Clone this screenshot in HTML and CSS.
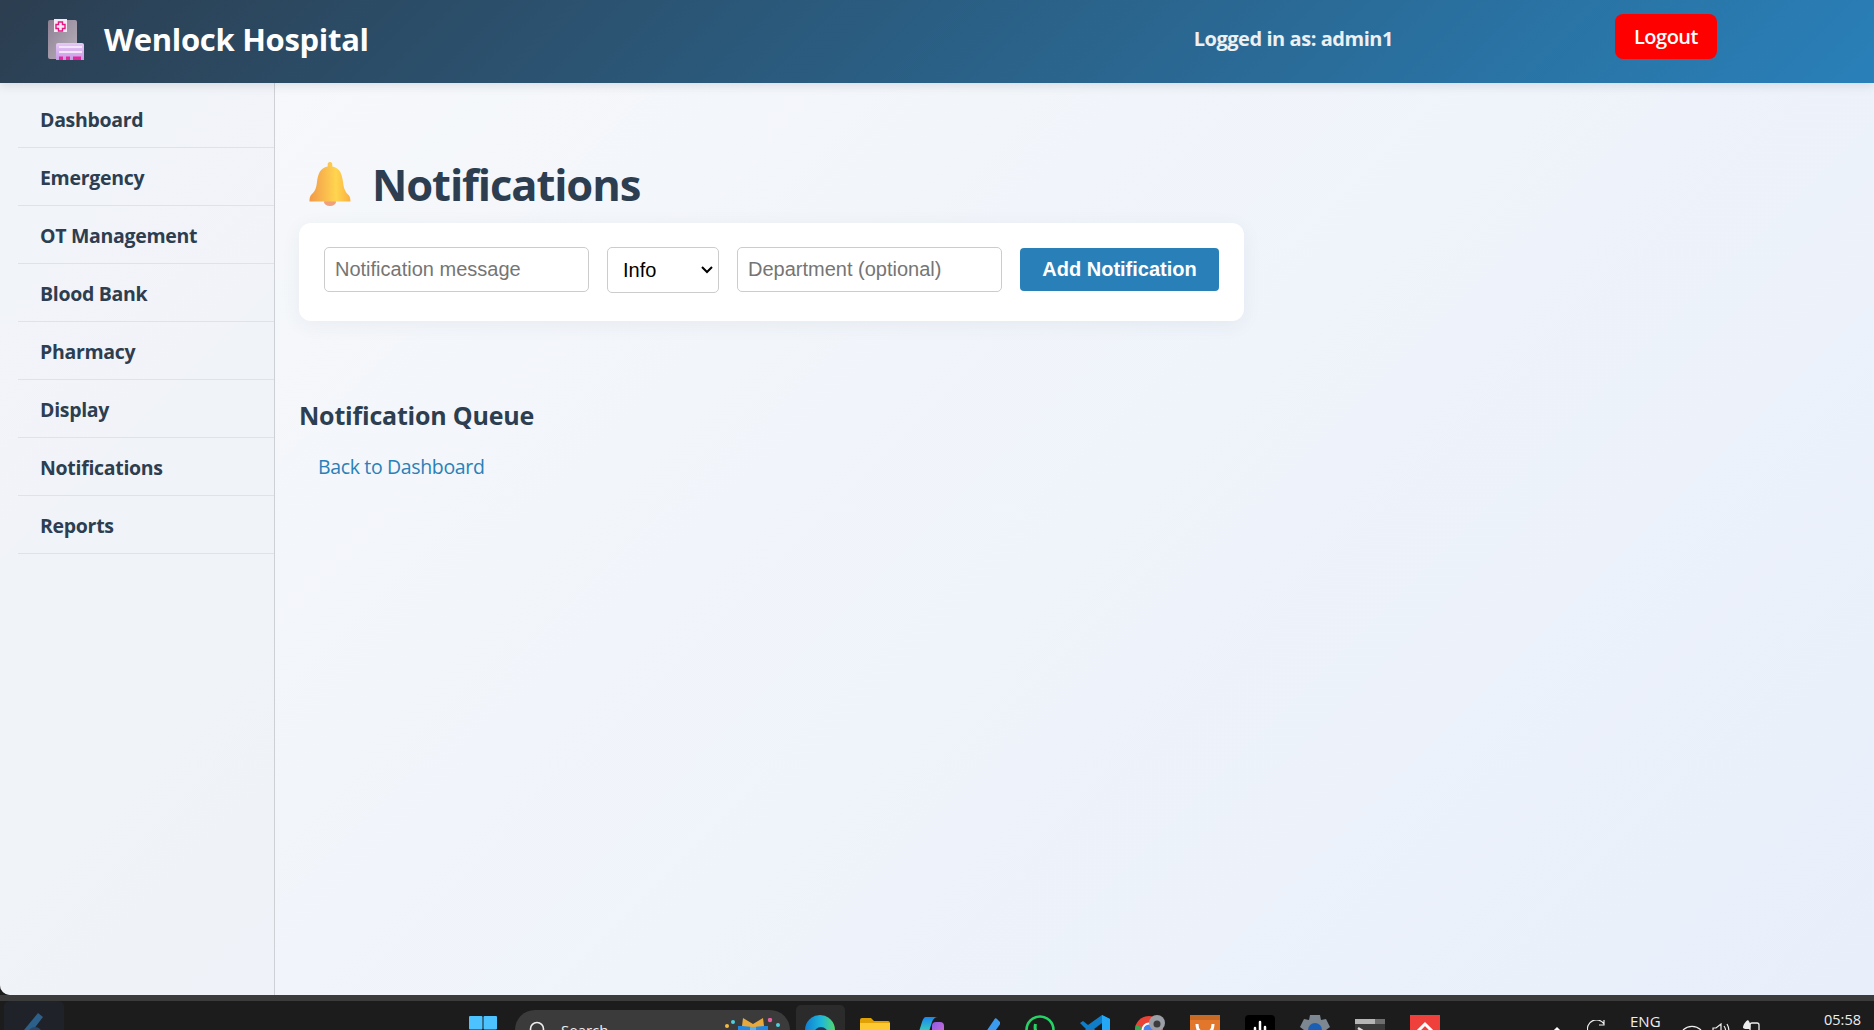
FILE: index.html
```html
<!DOCTYPE html>
<html lang="en">
<head>
<meta charset="utf-8">
<title>Notifications - Wenlock Hospital</title>
<link rel="stylesheet" href="styles.css">
</head>
<body>
<div class="window">
  <header class="topbar">
    <svg class="logo" viewBox="0 0 36 41" width="36" height="41">
      <defs>
        <linearGradient id="bld" x1="0" y1="0" x2="1" y2="1"><stop offset="0" stop-color="#8d8093"/><stop offset="1" stop-color="#b9b3bd"/></linearGradient>
        <linearGradient id="frt" x1="0" y1="0" x2="0" y2="1"><stop offset="0" stop-color="#e6c8f5"/><stop offset="1" stop-color="#c79ae6"/></linearGradient>
      </defs>
      <path d="M2 1h25a2 2 0 0 1 2 2v37H2a2 2 0 0 1-2-2V3a2 2 0 0 1 2-2z" fill="url(#bld)"/>
      <rect x="6" y="0" width="13" height="13" fill="#f5e9f5"/>
      <path d="M10.5 3h4v2.500H17v4h-2.500V12h-4V9.500H8v-4h2.500z" fill="none" stroke="#e5177f" stroke-width="1.400"/>
      <path d="M10 24h24a2 2 0 0 1 2 2v15H8V26a2 2 0 0 1 2-2z" fill="url(#frt)"/>
      <rect x="11" y="27" width="23" height="2" fill="#f3e6fa"/>
      <rect x="11" y="32" width="23" height="2" fill="#f3e6fa"/>
      <rect x="11" y="37.500" width="4" height="3.500" fill="#e5279f"/>
      <rect x="18" y="37.500" width="4" height="3.500" fill="#e5279f"/>
      <rect x="25" y="37.500" width="8" height="3.500" fill="#e5279f"/>
    </svg>
    <div class="brand">Wenlock Hospital</div>
    <div class="user">Logged in as: admin1</div>
    <button class="logout">Logout</button>
  </header>
  <div class="body">
    <nav class="sidebar">
      <a class="nav-item">Dashboard</a>
      <a class="nav-item">Emergency</a>
      <a class="nav-item">OT Management</a>
      <a class="nav-item">Blood Bank</a>
      <a class="nav-item">Pharmacy</a>
      <a class="nav-item">Display</a>
      <a class="nav-item">Notifications</a>
      <a class="nav-item">Reports</a>
    </nav>
    <main class="content">
      <h1 class="page-title">
        <svg class="bell" viewBox="0 0 42 44" width="42" height="44">
          <defs>
            <linearGradient id="bg" x1="0" y1="0" x2="1" y2="0"><stop offset="0" stop-color="#f2994a"/><stop offset=".65" stop-color="#ffd54f"/><stop offset="1" stop-color="#fbb040"/></linearGradient>
          </defs>
          <ellipse cx="21" cy="40" rx="6" ry="4" fill="#f0a07a"/>
          <path d="M21 0c1.500 0 2.300 1 2.300 2.300v2.200C31 6 33 12 34 20c.6 5 1.500 9 5 12.500 1.500 1.400 2.500 3 2.500 7H.5c0-4.500 1-6 2.500-7.500C6.500 29 7.400 25 8 20 9 12 11 6 18.700 4.500V2.300C18.700 1 19.500 0 21 0z" fill="url(#bg)"/>
        </svg>
        <span>Notifications</span>
      </h1>
      <form class="card">
        <input class="field" type="text" placeholder="Notification message">
        <select class="level"><option>Info</option></select>
        <input class="field" type="text" placeholder="Department (optional)">
        <button class="add" type="button">Add Notification</button>
      </form>
      <h2 class="queue">Notification Queue</h2>
      <a class="back">Back to Dashboard</a>
    </main>
  </div>
</div>
<div class="strip"></div>
<footer class="taskbar">
  <div class="appbox">
    <svg viewBox="0 0 26 30" width="26" height="30"><path d="M2 18 16 1l5 4-10 13z" fill="#2c5f8a"/><circle cx="13" cy="22" r="7" fill="#27496b"/></svg>
  </div>
  <svg class="start" viewBox="0 0 28 28" width="28" height="28"><rect x="0" y="0" width="13.500" height="13.500" rx="1" fill="#4cc2ff"/><rect x="14.500" y="0" width="13.500" height="13.500" rx="1" fill="#4cc2ff"/><rect x="0" y="14.500" width="13.500" height="13.500" rx="1" fill="#0f8fe0"/><rect x="14.500" y="14.500" width="13.500" height="13.500" rx="1" fill="#0f8fe0"/></svg>
  <div class="search">
    <svg class="lens" viewBox="0 0 18 18" width="18" height="18"><circle cx="8" cy="8" r="6.500" fill="none" stroke="#eee" stroke-width="1.600"/></svg>
    <span class="search-label">Search</span>
    <svg class="gift" viewBox="0 0 55 24" width="55" height="24"><rect x="13" y="8" width="30" height="16" fill="#1e88e5"/><rect x="25" y="8" width="6" height="16" fill="#4fb3f6"/><path d="M18 0l10 6 10-6 1 8-11 1-11-1z" fill="#e8a93c"/><circle cx="2" cy="8" r="2" fill="#f4b942"/><circle cx="8" cy="4" r="2" fill="#4dd0e1"/><circle cx="45" cy="2" r="2.200" fill="#ec5fa0"/><circle cx="53" cy="7" r="2" fill="#4dd0e1"/></svg>
  </div>
  <div class="edgebox">
    <svg viewBox="0 0 30 30" width="30" height="30"><defs><linearGradient id="edg" x1="0" y1="0" x2="1" y2="0"><stop offset="0" stop-color="#0f7fd4"/><stop offset=".55" stop-color="#1fb7d9"/><stop offset="1" stop-color="#52d96b"/></linearGradient></defs><circle cx="15" cy="15" r="15" fill="url(#edg)"/><circle cx="16" cy="19" r="7" fill="#1c3a5c"/></svg>
  </div>
  <div class="pins">
    <svg viewBox="0 0 30 30" width="30" height="30"><path d="M0 5a2 2 0 0 1 2-2h9l3 3h14a2 2 0 0 1 2 2v3H0z" fill="#e0a106"/><rect y="8" width="30" height="22" fill="#fcc933"/></svg>
    <svg viewBox="0 0 30 30" width="30" height="30"><defs><linearGradient id="cop" x1="0" y1="0" x2="0" y2="1"><stop offset="0" stop-color="#1c86f0"/><stop offset=".55" stop-color="#35c8c0"/><stop offset="1" stop-color="#7fd65a"/></linearGradient><linearGradient id="cop2" x1="0" y1="0" x2="1" y2="1"><stop offset="0" stop-color="#8a5be8"/><stop offset="1" stop-color="#e070d0"/></linearGradient></defs><rect x="17" y="7" width="12" height="20" rx="4" fill="url(#cop2)"/><path d="M11 2h12c-3 0-5 2-6 5l-6 19H1L7 7c1-3 2-5 4-5z" fill="url(#cop)"/></svg>
    <svg viewBox="0 0 30 30" width="30" height="30"><path d="M0 27l6-7 6 6-4 4H3z" fill="#1c4fa8"/><path d="M7 30 24 5c1-2 2-2 3-1l3 3c.5 1 .5 2-.5 3L15 30z" fill="#3b9bef"/></svg>
    <svg viewBox="0 0 30 30" width="30" height="30"><circle cx="15" cy="15" r="13.500" fill="none" stroke="#25d366" stroke-width="2.600"/><path d="M10.500 9c-1 4 0 8 3 11" fill="none" stroke="#25d366" stroke-width="3"/></svg>
    <svg viewBox="0 0 30 30" width="30" height="30"><path d="M22 0l8 4v24l-8 2L8 18l-5 4-3-2 6-6-6-6 3-2 5 4z" fill="#0f7dc8"/><path d="M22 0l8 4v24l-8 2z" fill="#24a8f5"/><path d="M22 8l-8 6 8 6z" fill="#1c1c1c"/></svg>
    <svg viewBox="0 0 30 30" width="30" height="30"><circle cx="14" cy="15" r="14" fill="#ea4335"/><path d="M14 15 2 22A14 14 0 0 0 14 29z" fill="#34a853"/><path d="M14 15h14a14 14 0 0 1-14 14z" fill="#fbbc05"/><path d="M14 15 2 22A14 14 0 0 1 1 10z" fill="#34a853"/><circle cx="14" cy="15" r="6.500" fill="#4285f4" stroke="#fff" stroke-width="2"/><circle cx="22" cy="8" r="8" fill="#9aa0a6"/><circle cx="22" cy="9" r="3.500" fill="#3c3c3c"/></svg>
    <svg viewBox="0 0 30 30" width="30" height="30"><rect width="30" height="30" rx="2" fill="#e2762b"/><rect width="30" height="5" fill="#c96a24"/><path d="M7 9c0 6 3 9 8 9s8-3 8-9M9 17c-3 5 1 11 6 9 5 2 9-4 6-9" fill="none" stroke="#fff" stroke-width="3"/></svg>
    <svg viewBox="0 0 30 30" width="30" height="30"><rect width="30" height="30" rx="4" fill="#000"/><path d="M15 7v19M10 13v13M20 12v14" stroke="#fff" stroke-width="2.500" stroke-linecap="round"/></svg>
    <svg viewBox="0 0 30 30" width="30" height="30"><path d="M10 0h10l1 5 5-1 4 8-4 3 4 3-4 8-5-1-1 5H10l-1-5-5 1-4-8 4-3-4-3 4-8 5 1z" fill="#7c8792"/><circle cx="15" cy="15" r="7" fill="#1a5fb4"/></svg>
    <svg viewBox="0 0 30 30" width="30" height="30"><rect y="4" width="30" height="26" rx="2" fill="#3a3a3a"/><rect y="4" width="30" height="5" fill="#6e6e6e"/><rect y="4" width="20" height="5" fill="#b5b5b5"/><path d="M3 13l8 5-8 6" fill="none" stroke="#ddd" stroke-width="2.500"/></svg>
    <svg viewBox="0 0 30 30" width="30" height="30"><rect width="30" height="30" fill="#f0403c"/><path d="M6 18l9-9 9 9M10 24l5-5 5 5" fill="none" stroke="#fff" stroke-width="3"/></svg>
  </div>
  <div class="tray">
    <svg class="t-caret" viewBox="0 0 12 8" width="12" height="8"><path d="M1 7l5-5 5 5" fill="none" stroke="#fff" stroke-width="1.500"/></svg>
    <svg class="t-refresh" viewBox="0 0 20 20" width="20" height="20"><path d="M1 12A9 9 0 0 1 17 4M17 0v5h-5" fill="none" stroke="#eee" stroke-width="1.200"/></svg>
    <span class="t-lang">ENG</span>
    <svg class="t-wifi" viewBox="0 0 20 16" width="20" height="16"><path d="M1 7a13 13 0 0 1 18 0M4 10a9 9 0 0 1 12 0M7 13a4 4 0 0 1 6 0" fill="none" stroke="#eee" stroke-width="1.300"/></svg>
    <svg class="t-vol" viewBox="0 0 18 16" width="18" height="16"><path d="M1 5h3l5-4v14l-5-4H1zM12 3c2 3 2 7 0 10M15 1c2.500 4 2.500 10 0 14" fill="none" stroke="#eee" stroke-width="1.200"/></svg>
    <svg class="t-bat" viewBox="0 0 18 16" width="18" height="16"><path d="M1 8c0-4 3-7 5-8 2 2 3 5 2 9H3z" fill="#eee"/><rect x="8" y="3" width="9" height="13" rx="2" fill="none" stroke="#eee" stroke-width="1.300"/></svg>
    <span class="t-time">05:58</span>
  </div>
</footer>
</body>
</html>
```
FILE: styles.css
```css
* { box-sizing: border-box; }
html, body { margin: 0; height: 100%; }
body {
  width: 1874px;
  height: 1030px;
  overflow: hidden;
  display: flex;
  flex-direction: column;
  background: #1c1c1c;
  font-family: "Open Sans", "Noto Sans", sans-serif;
}
.window {
  height: 995px;
  flex: none;
  display: flex;
  flex-direction: column;
  border-bottom-left-radius: 10px;
  overflow: hidden;
  background: linear-gradient(135deg, #f8f9fb 0%, #e8effa 100%);
}
.strip { height: 6px; flex: none; background: #3b3b3b; }

/* top bar */
.topbar {
  height: 83px;
  flex: none;
  display: flex;
  align-items: center;
  padding: 0 157px 10px 48px;
  color: #fff;
  background: linear-gradient(135deg, #2c3e50 0%, #2980b9 100%);
  box-shadow: 0 2px 10px rgba(44, 62, 80, .15);
  position: relative;
  z-index: 1;
}
.logo { margin: 6px 20px 0 0; flex: none; }
.brand { margin-top: 4px; font-size: 31px; font-weight: 700; letter-spacing: -.3px; }
.user { margin: 3px 222px 0 auto; font-size: 20px; font-weight: 700; color: #ecf0f1; letter-spacing: -.45px; }
.logout {
  width: 102px;
  height: 45px;
  border: 0;
  border-radius: 8px;
  background: #f00;
  color: #fff;
  font: 600 20px "Open Sans", sans-serif;
  letter-spacing: -.5px;
}

/* body */
.body { flex: 1; display: flex; min-height: 0; }
.sidebar {
  width: 275px;
  flex: none;
  padding: 7px 0 0 18px;
  border-right: 1px solid #cdd0d4;
  background: rgba(236, 240, 245, .55);
}
.nav-item {
  display: flex;
  align-items: center;
  height: 58px;
  padding: 2px 0 0 22px;
  border-bottom: 1px solid #dfe3e8;
  color: #2c3e50;
  font-size: 19.500px;
  font-weight: 700;
  letter-spacing: -.3px;
}

/* content */
.content { flex: 1; padding: 0 0 0 24px; }
.page-title {
  display: flex;
  align-items: center;
  gap: 21px;
  height: 54px;
  margin: 74px 0 0 10px;
  color: #2c3e50;
  font-size: 43.500px;
  font-weight: 700;
  letter-spacing: -1.100px;
}
.bell { flex: none; }
.card {
  display: inline-flex;
  align-items: center;
  gap: 18px;
  margin-top: 12px;
  padding: 21px 25px 26px;
  width: 945px;
  height: 98px;
  background: #fff;
  border-radius: 12px;
  box-shadow: 0 4px 20px rgba(44, 62, 80, .06);
}
.field {
  width: 265px;
  height: 45px;
  padding: 0 10px;
  border: 1px solid #ccc;
  border-radius: 5px;
  background: #fff;
  color: #000;
  font: 20px "Liberation Sans", Arial, sans-serif;
}
.field::placeholder { color: #757575; }
.level {
  width: 112px;
  height: 46px;
  padding: 0 11px 0 15px;
  border: 1px solid #ccc;
  border-radius: 5px;
  appearance: none;
  background: #fff url("data:image/svg+xml,%3Csvg xmlns='http://www.w3.org/2000/svg' width='12' height='8'%3E%3Cpath d='M1 1l5 5 5-5' fill='none' stroke='%23000' stroke-width='2'/%3E%3C/svg%3E") no-repeat right 5px center;
  color: #000;
  font: 20px "Liberation Sans", Arial, sans-serif;
}
.add {
  width: 199px;
  height: 43px;
  border: 0;
  border-radius: 4px;
  background: #2980b9;
  color: #fff;
  font: 700 20px "Liberation Sans", Arial, sans-serif;
}
.queue {
  margin: 78px 0 0;
  color: #2c3e50;
  font-size: 25px;
  font-weight: 700;
  line-height: 33px;
  letter-spacing: -.2px;
}
.back {
  display: block;
  margin: 22px 0 0 19px;
  color: #2980b9;
  font-size: 19.500px;
  line-height: 26px;
  letter-spacing: -.35px;
}

/* taskbar */
.taskbar {
  height: 29px;
  flex: none;
  display: flex;
  overflow: hidden;
  background: #1c1c1c;
  color: #eee;
}
.appbox {
  width: 60px;
  height: 40px;
  margin: 0 0 0 4px;
  padding: 11px 0 0 18px;
  background: #1f2329;
  border-radius: 6px;
  flex: none;
}
.start { margin: 15px 0 0 405px; flex: none; }
.search {
  display: flex;
  align-items: flex-start;
  width: 275px;
  height: 40px;
  margin: 9px 0 0 18px;
  padding: 11px 10px 0 14px;
  background: #3b3b3b;
  border-radius: 20px;
  flex: none;
}
.lens { flex: none; }
.search-label { margin-left: 14px; font-size: 15px; line-height: 18px; flex: 1; }
.gift { margin-top: -3px; flex: none; }
.edgebox {
  width: 49px;
  height: 40px;
  margin: 4px 0 0 6px;
  padding: 10px 0 0 9px;
  background: #2b2b2b;
  border-radius: 5px;
  flex: none;
}
.pins { display: flex; gap: 25px; margin: 14px 0 0 15px; flex: none; }
.pins svg { flex: none; }
.tray { position: relative; flex: 1; }
.tray > * { position: absolute; }
.t-caret { left: 111px; top: 25px; }
.t-refresh { left: 147px; top: 19px; }
.t-lang { left: 190px; top: 11px; font-size: 15px; line-height: 18px; }
.t-wifi { left: 242px; top: 22px; }
.t-vol { left: 272px; top: 22px; }
.t-bat { left: 302px; top: 19px; }
.t-time { left: 384px; top: 10px; font-size: 14.500px; line-height: 18px; }
```
